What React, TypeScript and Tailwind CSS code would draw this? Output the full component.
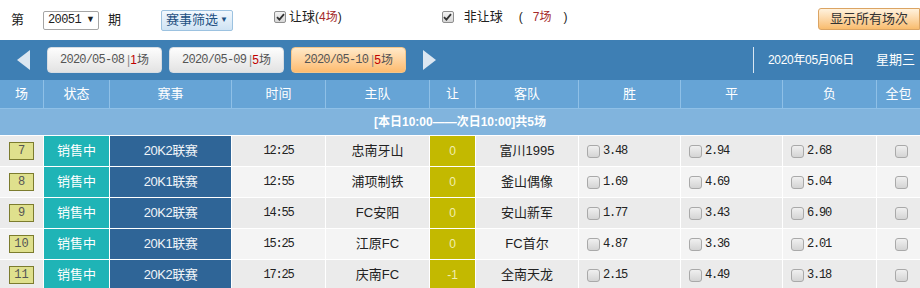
import React from "react";

const cols = "grid grid-cols-[44px_66px_122px_94px_104px_46px_103px_102px_102px_94px_43px]";
const cjk = "font-['Liberation_Sans','Noto_Sans_CJK_SC',sans-serif]";
const mono = "font-['Liberation_Mono','Noto_Sans_CJK_SC',monospace]";

const matches = [
  { no: "7", league: "20K2联赛", time: "12:25", home: "忠南牙山", hc: "0", away: "富川1995", w: "3.48", d: "2.94", l: "2.68" },
  { no: "8", league: "20K1联赛", time: "12:55", home: "浦项制铁", hc: "0", away: "釜山偶像", w: "1.69", d: "4.69", l: "5.04" },
  { no: "9", league: "20K2联赛", time: "14:55", home: "FC安阳", hc: "0", away: "安山新军", w: "1.77", d: "3.43", l: "6.90" },
  { no: "10", league: "20K1联赛", time: "15:25", home: "江原FC", hc: "0", away: "FC首尔", w: "4.87", d: "3.36", l: "2.01" },
  { no: "11", league: "20K2联赛", time: "17:25", home: "庆南FC", hc: "-1", away: "全南天龙", w: "2.15", d: "4.49", l: "3.18" },
];

const heads = ["场", "状态", "赛事", "时间", "主队", "让", "客队", "胜", "平", "负", "全包"];

function Box() {
  return (
    <span className="inline-block w-[13px] h-[13px] rounded-[3px] border border-[#a9a9a9] bg-gradient-to-b from-[#f0f0f0] to-[#d4d4d4]" />
  );
}

function CheckedBox() {
  return (
    <span className="inline-flex items-center justify-center w-[12px] h-[12px] rounded-[2px] border border-[#8f8f8f] bg-gradient-to-b from-[#f4f4f4] to-[#d6d6d6]">
      <svg width="9" height="8" viewBox="0 0 9 8">
        <path d="M1 4.2 L3.4 6.6 L8 1.2" fill="none" stroke="#333" strokeWidth="1.8" />
      </svg>
    </span>
  );
}

function DateBtn({ date, n, active }: { date: string; n: string; active?: boolean }) {
  return (
    <div
      className={
        "w-[115px] h-[26px] rounded-[4px] flex items-center justify-center text-[12px] text-[#555] " +
        (active
          ? "bg-gradient-to-b from-[#ffe9c8] to-[#fdbb6e] border border-[#f3c58a]"
          : "bg-gradient-to-b from-[#fdfdfd] to-[#e3e3e3] border border-[#d7dde3]")
      }
    >
      <span className={mono + " tracking-[-0.8px]"}>{date}</span>
      <span className="ml-[3px] text-[#888]">|</span>
      <span className="text-[#c00000]">{n}</span>
      <span>场</span>
    </div>
  );
}

function Odd({ v }: { v: string }) {
  return (
    <div className="flex items-center pl-[8px] border-r border-white">
      <Box />
      <span className={mono + " ml-[3px] text-[12px] text-[#222] tracking-[-1.2px]"}>{v}</span>
    </div>
  );
}

export default function App() {
  return (
    <div className={"w-[920px] h-[288px] overflow-hidden bg-white " + cjk}>
      {/* top filter bar */}
      <div className="h-10 flex items-center pl-[11px] text-[13px] text-[#222]">
        <span>第</span>
        <div className="ml-[19px] w-[56px] h-[19px] border border-[#a5a5a5] rounded-[2px] flex items-center pl-[4px] text-[12px]">
          <span className={mono + " tracking-[-0.6px]"}>20051</span>
          <span className="ml-[5px] text-[9px]">▼</span>
        </div>
        <span className="ml-[9px]">期</span>
        <div className="ml-[40px] w-[72px] h-[21px] border border-[#9cc2e0] rounded-[2px] bg-gradient-to-b from-[#f2f8fd] to-[#cfe3f4] flex items-center justify-center text-[#1d4f82]">
          赛事筛选<span className="ml-[2px] text-[8px]">▼</span>
        </div>
        <div className="ml-[41px] -mt-[6px] flex items-center">
          <CheckedBox />
          <span className="ml-[3px]">让球</span>
          <span className="text-[12px]">(</span>
          <span className="text-[#a52a2a] text-[12px]">4场</span>
          <span className="text-[12px]">)</span>
        </div>
        <div className="ml-[100px] -mt-[6px] flex items-center">
          <CheckedBox />
          <span className="ml-[10px]">非让球</span>
          <span className="ml-[16px] text-[12px]">(</span>
          <span className="ml-[10px] text-[#a52a2a] text-[12px]">7场</span>
          <span className="ml-[12px] text-[12px]">)</span>
        </div>
        <div className="ml-auto w-[102px] h-[22px] mb-[2px] rounded-l-[3px] border border-[#dba463] bg-gradient-to-b from-[#fff2dd] to-[#f8bc6d] flex items-center justify-center text-[13px] text-[#333]">
          显示所有场次
        </div>
      </div>

      {/* date nav bar */}
      <div className="h-10 bg-[#3e7fb4] flex items-center text-white">
        <svg className="ml-[17px]" width="13" height="20" viewBox="0 0 13 20">
          <path d="M13 0 L0 10 L13 20 Z" fill="#dce7f1" />
        </svg>
        <div className="ml-[17px] flex gap-[7px]">
          <DateBtn date="2020/05-08" n="1" />
          <DateBtn date="2020/05-09" n="5" />
          <DateBtn date="2020/05-10" n="5" active />
        </div>
        <svg className="ml-[17px]" width="13" height="20" viewBox="0 0 13 20">
          <path d="M0 0 L13 10 L0 20 Z" fill="#dce7f1" />
        </svg>
        <div className="ml-auto w-px h-[26px] bg-[#d8e6f2]" />
        <span className="ml-[14px] text-[12px] tracking-[-0.3px]">2020年05月06日</span>
        <span className="ml-[22px] mr-[5px] text-[13px]">星期三</span>
      </div>

      {/* header */}
      <div className={cols + " h-[28px] bg-[#66a4d6] text-white text-[13px]"}>
        {heads.map((h, i) => (
          <div
            key={h}
            className={"flex items-center justify-center " + (i < heads.length - 1 ? "border-r border-[#8fc0e7]" : "")}
          >
            {h}
          </div>
        ))}
      </div>
      <div className="h-[27px] bg-[#81b4dd] border-t border-[#8fc0e7] flex items-center justify-center text-white text-[12px] font-bold">
        [本日10:00——次日10:00]共5场
      </div>

      {/* rows */}
      {matches.map((m, i) => (
        <div
          key={m.no}
          className={cols + " h-[31px] border-t border-white text-[13px] text-[#222] " + (i % 2 === 0 ? "bg-[#ebebeb]" : "bg-[#f4f4f4]")}
        >
          <div className="flex items-center justify-center border-r border-white">
            <span className={mono + " w-[25px] h-[18px] bg-[#dfe08d] border border-[#7c7c2e] flex items-center justify-center text-[12px] text-[#555]"}>
              {m.no}
            </span>
          </div>
          <div className="flex items-center justify-center bg-[#1fb4b6] text-white border-r border-white">销售中</div>
          <div className="flex items-center justify-center bg-[#2f6597] text-[#f0f4f8] border-r border-white">
            <span className="tracking-[-0.5px]">{m.league}</span>
          </div>
          <div className={mono + " flex items-center justify-center border-r border-white text-[12px] tracking-[-1.2px]"}>{m.time}</div>
          <div className="flex items-center justify-center border-r border-white">{m.home}</div>
          <div className="flex items-center justify-center bg-[#c3b900] text-[#f2eeb0] text-[12px] border-r border-white">{m.hc}</div>
          <div className="flex items-center justify-center border-r border-white">{m.away}</div>
          <Odd v={m.w} />
          <Odd v={m.d} />
          <Odd v={m.l} />
          <div className="flex items-center justify-center pl-[6px]">
            <Box />
          </div>
        </div>
      ))}
    </div>
  );
}
